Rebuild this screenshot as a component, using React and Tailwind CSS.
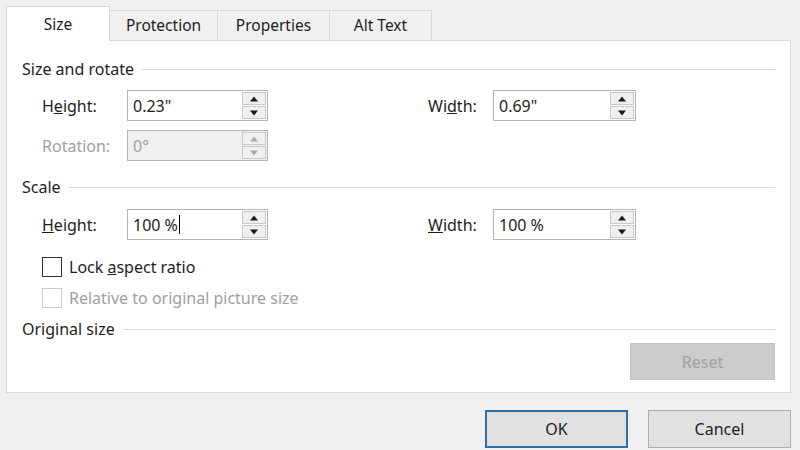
import React from 'react';

const font = { fontFamily: '"Noto Sans", "Open Sans", sans-serif' };

const Tab = ({ label, active }) => (
  <div
    className={
      active
        ? 'w-[104px] h-[35px] -mb-px bg-white border border-b-0 border-[#d9d9d9] flex items-center justify-center text-[15.5px] text-[#1e1e1e] relative z-10 pt-[2px]'
        : 'h-[30px] bg-[#f0f0f0] border border-b-0 border-l-0 border-[#d9d9d9] flex items-center justify-center text-[15.5px] text-[#1e1e1e] pt-[1px]'
    }
    style={active ? undefined : { width: label === 'Protection' ? 108 : label === 'Properties' ? 112 : 102 }}
  >
    {label}
  </div>
);

const SectionHead = ({ title, className }) => (
  <div className={'flex items-center pl-[15px] pr-[15px] h-[20px] ' + className}>
    <span className="text-[16px] text-[#1e1e1e] whitespace-nowrap">{title}</span>
    <div className="flex-1 h-px bg-[#dadada] ml-[8px]" />
  </div>
);

const Arrow = ({ up, disabled }) => (
  <svg width="10" height="6" viewBox="0 0 10 6">
    <polygon
      points={up ? '1,5.5 9,5.5 5,0.5' : '1,0.5 9,0.5 5,5.5'}
      fill={disabled ? '#a8a8a8' : '#1a1a1a'}
    />
  </svg>
);

const Spin = ({ value, disabled, width, caret }) => (
  <div
    className={
      'h-[31px] border border-[#b5b5b5] flex items-stretch ' +
      (disabled ? 'bg-[#f0f0f0]' : 'bg-white')
    }
    style={{ width }}
  >
    <div className={'flex-1 flex items-center pl-[5px] text-[16px] ' + (disabled ? 'text-[#a0a0a0]' : 'text-[#1e1e1e]')}>
      {value}
      {caret && <span className="inline-block w-px h-[19px] bg-black ml-px" />}
    </div>
    <div className="w-[26px] flex flex-col p-px gap-px">
      <div className="flex-1 border border-[#c9c9c9] bg-[#f0f0f0] flex items-center justify-center">
        <Arrow up disabled={disabled} />
      </div>
      <div className="flex-1 border border-[#c9c9c9] bg-[#f0f0f0] flex items-center justify-center">
        <Arrow disabled={disabled} />
      </div>
    </div>
  </div>
);

const Label = ({ children, className, disabled }) => (
  <div className={'text-[16px] ' + (disabled ? 'text-[#a0a0a0] ' : 'text-[#1e1e1e] ') + className}>{children}</div>
);

export default function App() {
  return (
    <div className="w-[800px] h-[450px] bg-[#f0f0f0] overflow-hidden" style={font}>
      <div className="flex items-end pl-[6px] pt-[6px]">
        <Tab label="Size" active />
        <Tab label="Protection" />
        <Tab label="Properties" />
        <Tab label="Alt Text" />
      </div>
      <div className="ml-[6px] mr-[9px] h-[353px] bg-white border border-[#d9d9d9] flex flex-col">
        <SectionHead title="Size and rotate" className="mt-[18px]" />

        <div className="flex items-center pl-[35px] mt-[11px]">
          <Label className="w-[85px]">H<span className="underline">e</span>ight:</Label>
          <Spin value={'0.23"'} width={141} />
          <div className="w-[160px]" />
          <Label className="w-[65px]">Wi<span className="underline">d</span>th:</Label>
          <Spin value={'0.69"'} width={143} />
        </div>

        <div className="flex items-center pl-[35px] mt-[9px]">
          <Label className="w-[85px]" disabled>Rotation:</Label>
          <Spin value="0°" width={141} disabled />
        </div>

        <SectionHead title="Scale" className="mt-[16px]" />

        <div className="flex items-center pl-[35px] mt-[12px]">
          <Label className="w-[85px]"><span className="underline">H</span>eight:</Label>
          <Spin value="100 %" width={141} caret />
          <div className="w-[160px]" />
          <Label className="w-[65px]"><span className="underline">W</span>idth:</Label>
          <Spin value="100 %" width={143} />
        </div>

        <div className="flex items-center pl-[35px] mt-[17px] h-[20px]">
          <div className="w-[20px] h-[20px] border border-[#333333] bg-white" />
          <Label className="ml-[7px]">Lock <span className="underline">a</span>spect ratio</Label>
        </div>

        <div className="flex items-center pl-[35px] mt-[11px] h-[20px]">
          <div className="w-[20px] h-[20px] border border-[#cccccc] bg-white" />
          <Label className="ml-[7px]" disabled>Relative to original picture size</Label>
        </div>

        <SectionHead title="Original size" className="mt-[11px]" />

        <div className="flex justify-end pr-[15px] mt-[4px]">
          <div className="w-[145px] h-[37px] bg-[#cccccc] border border-[#c4c4c4] flex items-center justify-center text-[16px] text-[#a0a0a0]">
            Reset
          </div>
        </div>
      </div>

      <div className="flex justify-end gap-[20px] pr-[9px] mt-[17px]">
        <div className="w-[143px] h-[38px] bg-[#e1e1e1] border-2 border-[#2f6fa8] flex items-center justify-center text-[16px] text-[#1e1e1e]">
          OK
        </div>
        <div className="w-[143px] h-[38px] bg-[#e1e1e1] border border-[#adadad] flex items-center justify-center text-[16px] text-[#1e1e1e]">
          Cancel
        </div>
      </div>
    </div>
  );
}
